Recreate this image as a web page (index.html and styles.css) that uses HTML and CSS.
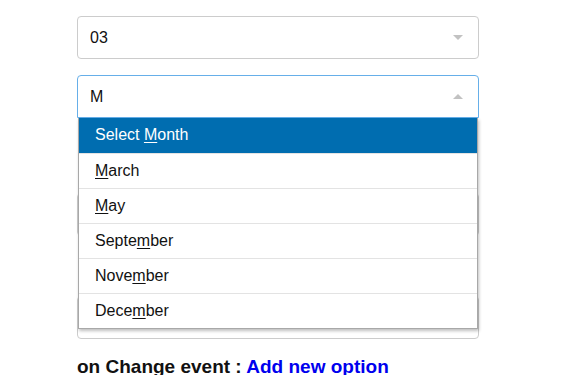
FILE: index.html
```html
<html>
  <head>
    <link rel="stylesheet" href="styles.css">
  </head>
  <body>
    <div class="container">
      <div class="select_box">
        <span class="value">03</span>
        <span class="arrow down"></span>
      </div>

      <div class="select_wrap">
        <div class="select_box open">
          <span class="value">M</span>
          <span class="arrow up"></span>
        </div>
        <ul class="dropdown">
          <li class="active">Select <u>M</u>onth</li>
          <li><u>M</u>arch</li>
          <li><u>M</u>ay</li>
          <li>Septe<u>m</u>ber</li>
          <li>Nove<u>m</u>ber</li>
          <li>Dece<u>m</u>ber</li>
        </ul>
      </div>

      <div class="select_box hidden_one"></div>
      <div class="select_box hidden_two"></div>

      <div class="event_line">
        on Change event : <a href="#" class="link">Add new option</a>
      </div>
    </div>
  </body>
</html>
```

FILE: styles.css
```css
body {
  margin: 0;
  background-color: white;
  font-family: "Liberation Sans", Arial, sans-serif;
  color: #111;
}
.container {
  width: 402px;
  margin-left: 77px;
  padding-top: 16px;
}
.select_box {
  box-sizing: border-box;
  height: 43px;
  border: 1px solid #cccccc;
  border-radius: 4px;
  display: flex;
  align-items: center;
  justify-content: space-between;
  padding: 0 15px 0 12px;
  font-size: 16px;
  background-color: white;
}
.select_wrap {
  position: relative;
  margin-top: 16px;
}
.select_box.open {
  border-color: #66afe9;
  border-bottom-left-radius: 0;
  border-bottom-right-radius: 0;
}
.arrow {
  width: 0;
  height: 0;
  border-left: 5px solid transparent;
  border-right: 5px solid transparent;
}
.arrow.down {
  border-top: 5px solid #c2c2c2;
}
.arrow.up {
  border-bottom: 5px solid #c2c2c2;
}
.dropdown {
  position: absolute;
  top: 43px;
  left: 1px;
  width: 400px;
  box-sizing: border-box;
  margin: 0;
  padding: 0;
  list-style: none;
  background-color: white;
  border: 1px solid #a8a8a8;
  border-top: none;
  box-shadow: 1px 2px 3px rgba(0, 0, 0, 0.25);
  z-index: 2;
}
.dropdown li {
  height: 35px;
  line-height: 34px;
  padding-left: 16px;
  font-size: 16px;
  border-top: 1px solid #e3e3e3;
  box-sizing: border-box;
}
.dropdown li:first-child {
  border-top: none;
}
.dropdown li.active {
  background-color: #006db0;
  color: white;
}
.dropdown u {
  text-decoration-thickness: 1px;
  text-underline-offset: 2px;
}
.hidden_one {
  margin-top: 75px;
}
.hidden_two {
  margin-top: 60px;
}
.event_line {
  margin-top: 17px;
  font-size: 19px;
  font-weight: bold;
  color: #111;
}
a.link {
  color: #0000ee;
  text-decoration: none;
}
```
